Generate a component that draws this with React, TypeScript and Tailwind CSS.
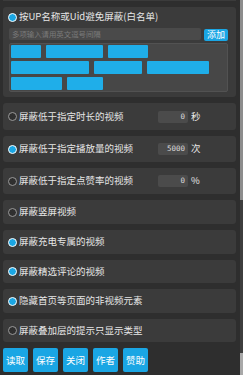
import React from "react";

const font = { fontFamily: '"Noto Sans CJK SC", "Noto Sans", sans-serif' };

function Radio({ on }: { on: boolean }) {
  return on ? (
    <span className="block w-[9px] h-[9px] shrink-0 rounded-full bg-[#1aa6e4] border border-white" />
  ) : (
    <span className="block w-[9px] h-[9px] shrink-0 rounded-full bg-[#2f2f2f] border border-[#9a9a9a]" />
  );
}

function OptionCard({
  on,
  label,
  h,
  value,
  unit,
}: {
  on: boolean;
  label: string;
  h: string;
  value?: string;
  unit?: string;
}) {
  return (
    <div className={`${h} shrink-0 rounded-[3px] bg-[#3b3b3b] flex items-center pl-[5px]`}>
      <Radio on={on} />
      <span className="ml-[2px] flex-1 text-[9.5px] leading-none text-[#e6e6e6] whitespace-nowrap">{label}</span>
      {value !== undefined && (
        <div className="flex items-center pr-[33px]">
          <div
            className="w-[30px] h-[12px] rounded-[2px] bg-[#4b4b4b] text-right pr-[3px] text-[7.5px] leading-[12px] text-[#dcdcdc]"
            style={{ fontFamily: '"DejaVu Sans Mono", monospace' }}
          >
            {value}
          </div>
          <span className="ml-[3px] w-[12px] text-[9.5px] leading-none text-[#e6e6e6]">{unit}</span>
        </div>
      )}
    </div>
  );
}

const chips = [30, 57, 40, 78, 48, 62, 51, 36];

export default function App() {
  return (
    <div className="w-[243px] h-[375px] bg-[#2e2e2e] flex overflow-hidden" style={font}>
      <div className="w-[240px] flex flex-col gap-[6px] pl-[3px] pr-[4px]">
        <div className="h-[1px] shrink-0 bg-[#3b3b3b]" />
        {/* whitelist card */}
        <div className="h-[90px] shrink-0 rounded-[3px] bg-[#3b3b3b] pt-[3px] pl-[6px] pr-[8px] pb-[5px] flex flex-col">
          <div className="h-[14px] flex items-center -ml-[1px]">
            <Radio on={true} />
            <span className="ml-[2px] text-[9.5px] leading-none text-[#e6e6e6] whitespace-nowrap">
              按UP名称或Uid避免屏蔽(白名单)
            </span>
          </div>
          <div className="mt-[4px] h-[13px] flex items-start gap-[3px]">
            <div className="flex-1 h-[12px] rounded-[2px] bg-[#4a4a4a] pl-[3px] text-[7.4px] leading-[12px] text-[#7a7a7a] whitespace-nowrap overflow-hidden">
              多项输入请用英文逗号间隔
            </div>
            <div className="mt-[1px] w-[24px] h-[12px] rounded-[2px] bg-[#1aa6e4] text-white text-[9px] leading-[12px] text-center">
              添加
            </div>
          </div>
          <div className="mt-[2px] h-[49px] rounded-[2px] bg-[#474747] border border-[#525252] px-[1px] pt-[1px] flex flex-wrap content-start gap-x-[5px] gap-y-[3px] overflow-hidden">
            {chips.map((w, i) => (
              <div
                key={i}
                className="h-[13px] bg-[#1faee9] blur-[0.6px] rounded-[1px]"
                style={{ width: w }}
              />
            ))}
          </div>
        </div>
        <OptionCard on={false} label="屏蔽低于指定时长的视频" h="h-[27px]" value="0" unit="秒" />
        <OptionCard on={true} label="屏蔽低于指定播放量的视频" h="h-[26px]" value="5000" unit="次" />
        <OptionCard on={false} label="屏蔽低于指定点赞率的视频" h="h-[26px]" value="0" unit="%" />
        <OptionCard on={false} label="屏蔽竖屏视频" h="h-[24px]" />
        <OptionCard on={true} label="屏蔽充电专属的视频" h="h-[24px]" />
        <OptionCard on={true} label="屏蔽精选评论的视频" h="h-[23px]" />
        <OptionCard on={true} label="隐藏首页等页面的非视频元素" h="h-[24px]" />
        <OptionCard on={false} label="屏蔽叠加层的提示只显示类型" h="h-[23px]" />
        <div className="flex gap-[5px] shrink-0">
          {["读取", "保存", "关闭", "作者", "赞助"].map((t) => (
            <div
              key={t}
              className="w-[25px] h-[24px] rounded-[2px] bg-[#1aa6e4] text-white text-[9.5px] flex items-center justify-center"
            >
              {t}
            </div>
          ))}
        </div>
      </div>
      <div className="w-[3px] flex flex-col">
        <div className="h-[200px] bg-[#8c8c8c]" />
        <div className="flex-1 bg-[#3d3d3d]" />
        <div className="h-[22px] bg-[#a8a8a8]" />
      </div>
    </div>
  );
}
